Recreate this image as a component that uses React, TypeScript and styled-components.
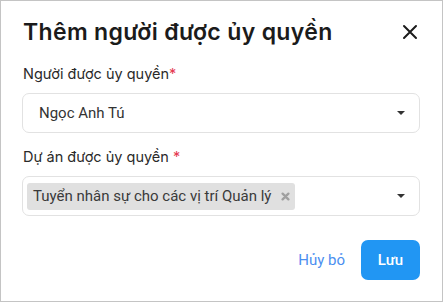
import React from "react";
import styled, { createGlobalStyle } from "styled-components";

const GlobalStyle = createGlobalStyle`
  html, body {
    margin: 0;
    padding: 0;
    background: #ffffff;
  }
  * {
    box-sizing: border-box;
  }
`;

export default function App() {
  return (
    <>
      <GlobalStyle />
      <Dialog>
        <Header>
          <Title>Thêm người được ủy quyền</Title>
          <CloseButton aria-label="Đóng">
            <svg width="16" height="16" viewBox="0 0 16 16">
              <path
                d="M2 2L14 14M14 2L2 14"
                stroke="#1b1b1b"
                strokeWidth="2"
                strokeLinecap="round"
              />
            </svg>
          </CloseButton>
        </Header>

        <Field>
          <Label>
            Người được ủy quyền<Star>*</Star>
          </Label>
          <SelectBox>
            <Value>Ngọc Anh Tú</Value>
            <Caret />
          </SelectBox>
        </Field>

        <Field>
          <Label>
            Dự án được ủy quyền <Star>*</Star>
          </Label>
          <SelectBox $multi>
            <Chip>
              <span>Tuyển nhân sự cho các vị trí Quản lý</span>
              <ChipRemove viewBox="0 0 10 10">
                <path
                  d="M1.8 1.8L8.2 8.2M8.2 1.8L1.8 8.2"
                  stroke="#a0a0a0"
                  strokeWidth="2.6"
                  strokeLinecap="round"
                />
              </ChipRemove>
            </Chip>
            <Caret />
          </SelectBox>
        </Field>

        <Footer>
          <TextButton>Hủy bỏ</TextButton>
          <PrimaryButton>Lưu</PrimaryButton>
        </Footer>
      </Dialog>
    </>
  );
}

const Dialog = styled.div`
  width: 443px;
  height: 302px;
  border: 1px solid #c4c4c4;
  background: #fff;
  padding: 17px 22px 0 21px;
  font-family: Roboto, "Noto Sans", sans-serif;
  color: #222;
`;

const Header = styled.div`
  display: flex;
  justify-content: space-between;
  align-items: center;
  height: 28px;
  margin-bottom: 18px;
`;

const Title = styled.h1`
  margin: 0 0 0 1px;
  font-family: Inter, "Noto Sans", sans-serif;
  font-size: 23px;
  font-weight: 600;
  letter-spacing: 0.35px;
  color: #1b1b1b;
`;

const CloseButton = styled.button`
  display: flex;
  align-items: center;
  justify-content: center;
  width: 20px;
  height: 20px;
  padding: 0;
  border: none;
  background: none;
  cursor: pointer;
`;

const Field = styled.div`
  display: flex;
  flex-direction: column;
  margin-bottom: 14px;
`;

const Label = styled.label`
  margin-left: 1px;
  font-family: Inter, "Noto Sans", sans-serif;
  font-size: 14.5px;
  line-height: 20px;
  color: #2a2a2a;
  margin-bottom: 9px;
`;

const Star = styled.span`
  color: #e53950;
`;

const SelectBox = styled.div<{ $multi?: boolean }>`
  display: flex;
  align-items: center;
  justify-content: space-between;
  height: 40px;
  border: 1px solid #e2e2e2;
  border-radius: 7px;
  padding: ${(p) => (p.$multi ? "0 14px 0 4px" : "0 14px 0 16px")};
`;

const Value = styled.span`
  font-size: 15px;
  color: #333;
`;

const Caret = styled.span`
  width: 0;
  height: 0;
  border-left: 4px solid transparent;
  border-right: 4px solid transparent;
  border-top: 4px solid #333;
`;

const Chip = styled.div`
  display: flex;
  align-items: center;
  gap: 10px;
  height: 27px;
  padding: 0 5px 0 6px;
  background: #e0e0e0;
  border-radius: 3px;
  font-size: 15px;
  color: #3a3a3a;
`;

const ChipRemove = styled.svg`
  width: 9px;
  height: 9px;
`;

const Footer = styled.div`
  display: flex;
  justify-content: flex-end;
  align-items: center;
  gap: 16px;
  margin-top: 24px;
`;

const TextButton = styled.button`
  border: none;
  background: none;
  padding: 0;
  font-family: inherit;
  font-size: 15px;
  color: #4b8ff0;
  cursor: pointer;
`;

const PrimaryButton = styled.button`
  width: 59px;
  height: 40px;
  border: none;
  border-radius: 7px;
  background: #2196f3;
  color: #fff;
  font-family: inherit;
  font-size: 15px;
  font-weight: 500;
  cursor: pointer;
`;
